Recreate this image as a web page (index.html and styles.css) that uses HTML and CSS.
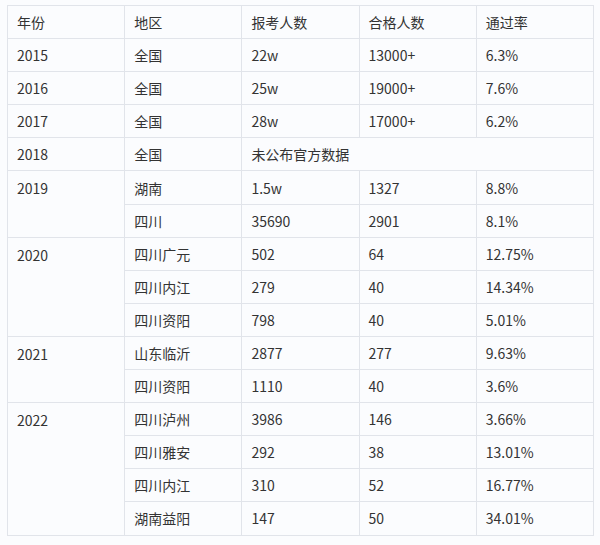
FILE: index.html
```html
<!DOCTYPE html>
<html lang="zh">
<head>
<meta charset="utf-8">
<link rel="stylesheet" href="styles.css">
</head>
<body>
<table class="data">
<tr><td>年份</td><td>地区</td><td>报考人数</td><td>合格人数</td><td>通过率</td></tr>
<tr><td>2015</td><td>全国</td><td>22w</td><td>13000+</td><td>6.3%</td></tr>
<tr><td>2016</td><td>全国</td><td>25w</td><td>19000+</td><td>7.6%</td></tr>
<tr><td>2017</td><td>全国</td><td>28w</td><td>17000+</td><td>6.2%</td></tr>
<tr><td>2018</td><td>全国</td><td colspan="3">未公布官方数据</td></tr>
<tr><td rowspan="2" class="year">2019</td><td>湖南</td><td>1.5w</td><td>1327</td><td>8.8%</td></tr>
<tr><td>四川</td><td>35690</td><td>2901</td><td>8.1%</td></tr>
<tr><td rowspan="3" class="year">2020</td><td>四川广元</td><td>502</td><td>64</td><td>12.75%</td></tr>
<tr><td>四川内江</td><td>279</td><td>40</td><td>14.34%</td></tr>
<tr><td>四川资阳</td><td>798</td><td>40</td><td>5.01%</td></tr>
<tr><td rowspan="2" class="year">2021</td><td>山东临沂</td><td>2877</td><td>277</td><td>9.63%</td></tr>
<tr><td>四川资阳</td><td>1110</td><td>40</td><td>3.6%</td></tr>
<tr><td rowspan="4" class="year">2022</td><td>四川泸州</td><td>3986</td><td>146</td><td>3.66%</td></tr>
<tr><td>四川雅安</td><td>292</td><td>38</td><td>13.01%</td></tr>
<tr><td>四川内江</td><td>310</td><td>52</td><td>16.77%</td></tr>
<tr><td>湖南益阳</td><td>147</td><td>50</td><td>34.01%</td></tr>
</table>
</body>
</html>
```
FILE: styles.css
```css
html, body {
  margin: 0;
  padding: 0;
  background: #fbfcfe;
}
body {
  padding: 5px 0 0 7px;
  font-family: "Noto Sans CJK SC", "Noto Sans", sans-serif;
  font-size: 14px;
  color: #333;
}
.data {
  border-collapse: collapse;
  table-layout: fixed;
  width: 587px;
  background: #fbfcfe;
}
.data td {
  border: 1px solid #e1e4ea;
  height: 33.1px;
  padding: 0 0 0 9px;
  box-sizing: border-box;
  vertical-align: middle;
  line-height: 20px;
  white-space: nowrap;
}
.data td.year {
  vertical-align: top;
  padding-top: 7px;
}
```
